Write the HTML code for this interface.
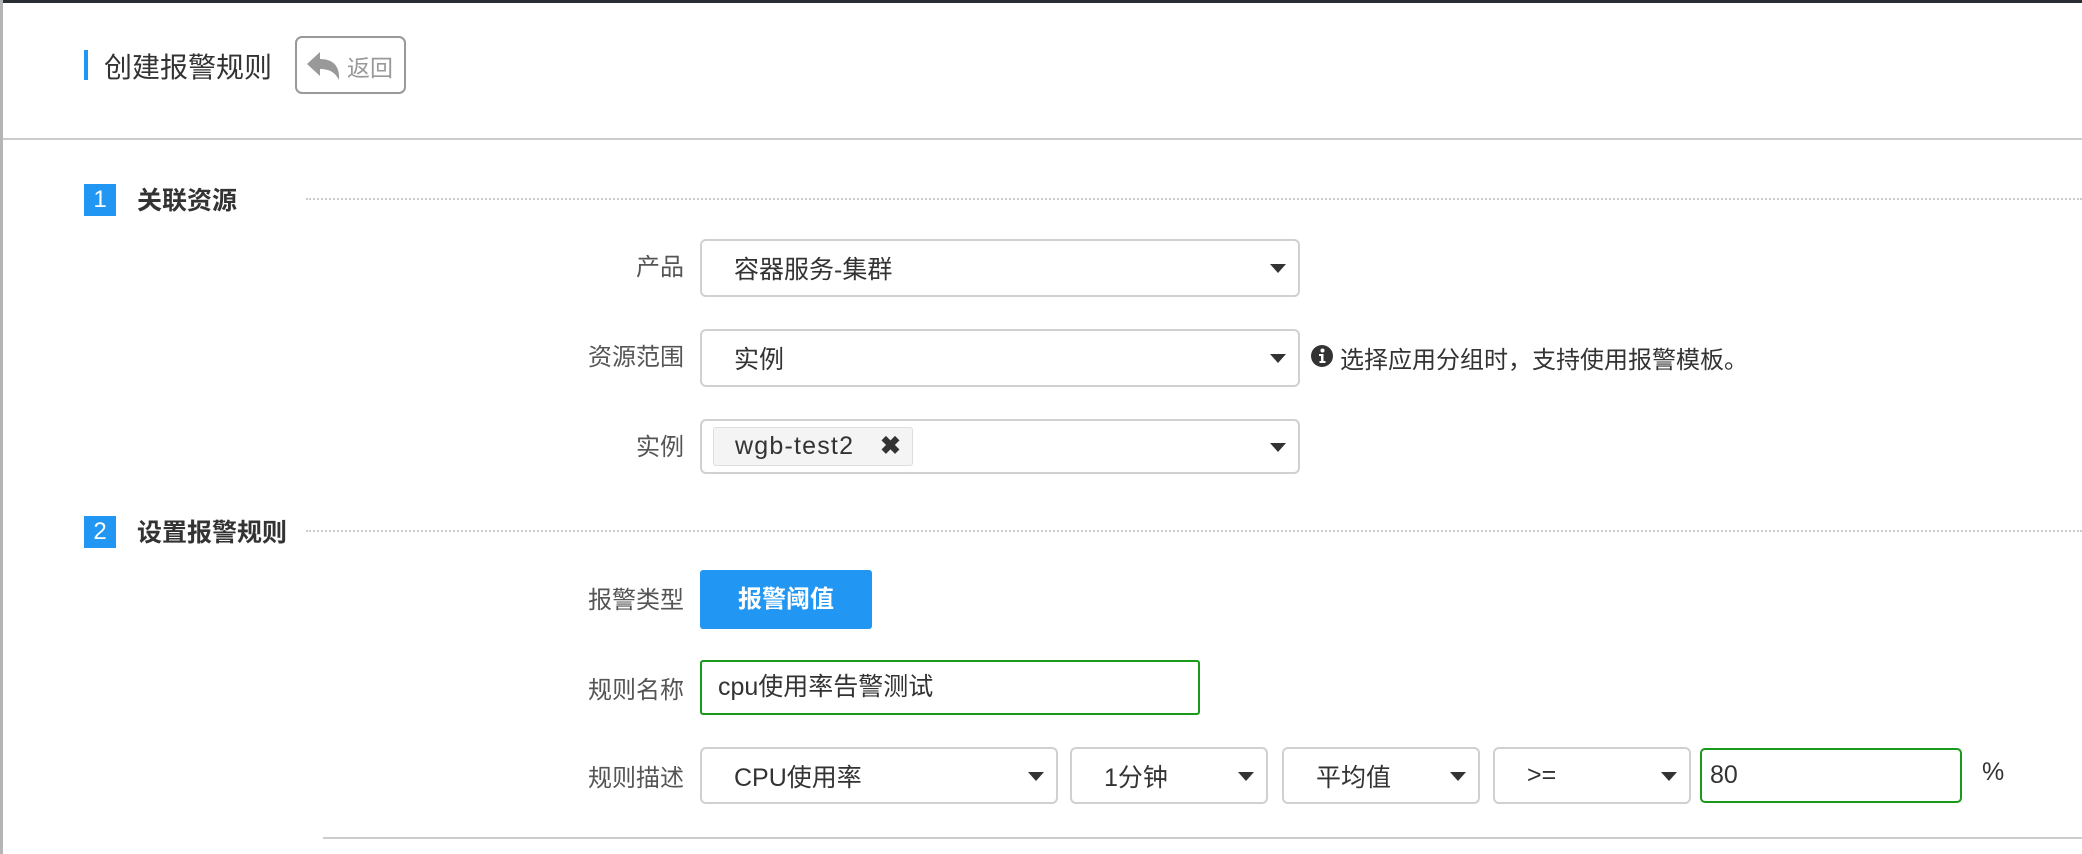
<!DOCTYPE html>
<html><head><meta charset="utf-8"><style>
*{box-sizing:border-box;margin:0;padding:0}
body{width:2082px;height:854px;background:#fff;position:relative;overflow:hidden;font-family:"Liberation Sans","Noto Sans CJK SC",sans-serif;color:#333}
.a{position:absolute}
.lbl{position:absolute;font-size:24px;color:#555;text-align:right;width:200px;left:484px}
.sel{position:absolute;border:2px solid #d0d0d0;border-radius:6px;background:#fff;font-size:25px;color:#333;display:flex;align-items:center;padding-left:32px}
.sel:after{content:"";position:absolute;right:12px;top:50%;margin-top:-4px;border-left:8px solid transparent;border-right:8px solid transparent;border-top:9px solid #333}
.badge{position:absolute;left:84px;width:32px;height:32px;background:#2196f3;color:#fff;font-size:24px;text-align:center;line-height:32px}
.sh{position:absolute;left:137px;font-size:25px;font-weight:bold;color:#333}
.dot{position:absolute;left:306px;right:0;border-top:2px dotted #ccc}
</style></head><body>
<div class="a" style="left:0;top:0;width:2082px;height:3px;background:#2a2d33"></div>
<div class="a" style="left:0;top:0;width:3px;height:854px;background:#b5b5b5"></div>
<div class="a" style="left:84px;top:50px;width:4px;height:30px;background:#2196f3"></div>
<div class="a" style="left:104px;top:46px;font-size:28px;color:#333">创建报警规则</div>
<div class="a" style="left:295px;top:36px;width:111px;height:58px;border:2px solid #999;border-radius:7px"></div>
<svg class="a" style="left:307px;top:52px" width="34" height="28" viewBox="0 0 34 28"><path d="M0 12 L13 0 L13 7 C26 7 33 14 32 28 C28 20 22 17 13 17 L13 24 Z" fill="#999"/></svg>
<div class="a" style="left:347px;top:49px;font-size:23px;color:#999">返回</div>
<div class="a" style="left:3px;top:138px;width:2079px;height:2px;background:#ccc"></div>

<div class="badge" style="top:184px">1</div>
<div class="sh" style="top:181px">关联资源</div>
<div class="dot" style="top:198px"></div>

<div class="lbl" style="top:247px">产品</div>
<div class="sel" style="left:700px;top:239px;width:600px;height:58px">容器服务-集群</div>
<div class="lbl" style="top:337px">资源范围</div>
<div class="sel" style="left:700px;top:329px;width:600px;height:58px">实例</div>
<svg class="a" style="left:1310px;top:344px" width="24" height="24"><circle cx="12" cy="12" r="11" fill="#333"/><circle cx="12.5" cy="6.5" r="2" fill="#fff"/><path d="M9 10h4.5v7h2v2h-6v-2h1.5v-5H9z" fill="#fff"/></svg>
<div class="a" style="left:1340px;top:340px;font-size:24px;color:#333">选择应用分组时，支持使用报警模板。</div>
<div class="lbl" style="top:427px">实例</div>
<div class="sel" style="left:700px;top:419px;width:600px;height:55px;padding-left:0">
<div class="a" style="left:11px;top:6px;width:200px;height:39px;background:#f4f4f4;border:1px solid #ddd;border-radius:3px;font-size:25px;letter-spacing:1.2px;line-height:37px;padding-left:21px">wgb-test2<span style="position:absolute;left:166px;top:0;font-weight:bold;font-size:25px">✖</span></div>
</div>

<div class="badge" style="top:516px">2</div>
<div class="sh" style="top:513px">设置报警规则</div>
<div class="dot" style="top:530px"></div>

<div class="lbl" style="top:580px">报警类型</div>
<div class="a" style="left:700px;top:570px;width:172px;height:59px;background:#2196f3;border-radius:3px;color:#fff;font-size:24px;font-weight:bold;text-align:center;line-height:59px">报警阈值</div>
<div class="lbl" style="top:670px">规则名称</div>
<div class="a" style="left:700px;top:660px;width:500px;height:55px;border:2px solid #1a9a1a;border-radius:3px;font-size:25px;line-height:51px;padding-left:16px">cpu使用率告警测试</div>
<div class="lbl" style="top:758px">规则描述</div>
<div class="sel" style="left:700px;top:747px;width:358px;height:57px">CPU使用率</div>
<div class="sel" style="left:1070px;top:747px;width:198px;height:57px">1分钟</div>
<div class="sel" style="left:1282px;top:747px;width:198px;height:57px">平均值</div>
<div class="sel" style="left:1493px;top:747px;width:198px;height:57px">&gt;=</div>
<div class="a" style="left:1700px;top:748px;width:262px;height:55px;border:2px solid #1a9a1a;border-radius:5px;font-size:25px;line-height:51px;padding-left:8px">80</div>
<div class="a" style="left:1982px;top:758px;font-size:25px">%</div>
<div class="a" style="left:323px;top:837px;width:1759px;height:2px;background:#ccc"></div>
</body></html>
